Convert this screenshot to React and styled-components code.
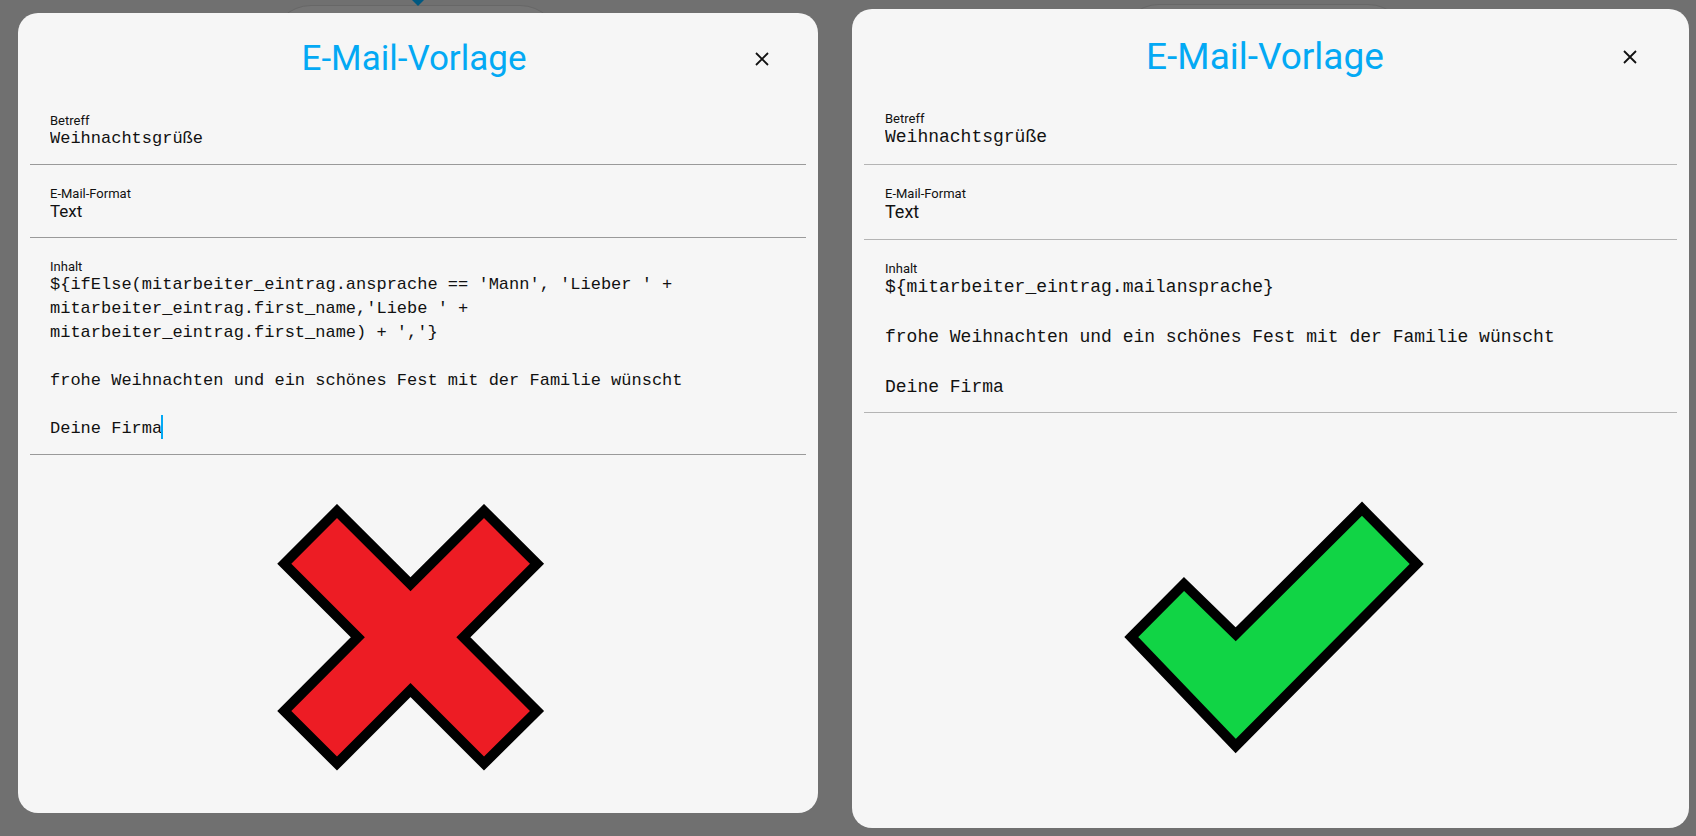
import React from "react";
import styled, { createGlobalStyle } from "styled-components";

const Global = createGlobalStyle`
  * { box-sizing: border-box; }
  body {
    margin: 0;
    background: #707070;
    color: #111;
    font-family: Roboto, "Liberation Sans", sans-serif;
  }
`;

const Page = styled.main`
  position: relative;
  display: grid;
  grid-template-columns: minmax(0, 800fr) minmax(0, 837fr);
  align-items: start;
  gap: 34px;
  min-height: 100vh;
  padding: 9px 7px 8px 18px;
  overflow: hidden;
`;

const NodeOutline = styled.div`
  position: absolute;
  top: ${(p) => p.$top}px;
  left: ${(p) => p.$left}%;
  width: 17%;
  height: 80px;
  border: 1px solid #676767;
  border-radius: 40px;
  background: #757575;
`;

const Arrow = styled.svg`
  position: absolute;
  top: 0;
  left: 24%;
  width: 24px;
  height: 6px;
`;

const Dialog = styled.section`
  position: relative;
  margin-top: ${(p) => (p.$large ? 0 : 4)}px;
  padding: 0 12px ${(p) => (p.$large ? 74 : 42)}px;
  border-radius: 20px;
  background: #f6f6f6;
`;

const Header = styled.header`
  display: grid;
  grid-template-columns: 52px 1fr ${(p) => (p.$large ? 63 : 60)}px;
  align-items: center;
  height: ${(p) => (p.$large ? 81 : 79)}px;
  padding-top: ${(p) => (p.$large ? 14 : 13)}px;
`;

const Title = styled.h1`
  grid-column: 2;
  margin: 0;
  color: #03a9f4;
  font-size: ${(p) => (p.$large ? 37 : 35)}px;
  font-weight: 400;
  line-height: 40px;
  text-align: center;
`;

const CloseButton = styled.button`
  display: grid;
  place-items: center;
  width: 32px;
  height: 32px;
  padding: 0;
  border: 0;
  background: none;
  color: #111;
`;

const Field = styled.div`
  position: relative;
  display: flex;
  flex-direction: column;
  padding: 23px 20px ${(p) => (p.$large ? 15 : 13)}px ${(p) => (p.$large ? 21 : 20)}px;
  border-bottom: 1px solid ${(p) => (p.$large ? "#b4b4b4" : "#9a9a9a")};
`;

const ContentField = styled(Field)`
  padding-bottom: ${(p) => (p.$large ? 12 : 13)}px;
`;

const Label = styled.label`
  font-size: 13px;
  line-height: 12px;
`;

const textStyle = `
  display: block;
  width: 100%;
  margin: 0;
  padding: 0;
  border: 0;
  outline: 0;
  border-radius: 0;
  background: none;
  color: #111;
`;

const mono = `"Liberation Mono", monospace`;

const TextInput = styled.input`
  ${textStyle}
  height: 24px;
  font: ${(p) => (p.$large ? 18 : 17)}px / 24px ${mono};
`;

const Select = styled.select`
  ${textStyle}
  appearance: none;
  height: 24px;
  padding-bottom: ${(p) => (p.$large ? 0 : 2)}px;
  font: ${(p) => (p.$large ? 18 : 17)}px / 22px Roboto, sans-serif;
`;

const TextArea = styled.textarea`
  ${textStyle}
  resize: none;
  overflow: hidden;
  font: ${(p) => (p.$large ? 18 : 17)}px / ${(p) => (p.$large ? 25 : 24)}px ${mono};
`;

const Caret = styled.span`
  position: absolute;
  bottom: 15px;
  left: 21px;
  width: 11ch;
  height: 24px;
  border-right: 2px solid #03a9f4;
  font: 17px / 24px ${mono};
  pointer-events: none;
`;

const Verdict = styled.svg`
  display: block;
  margin: ${(p) => p.$gap}px auto 0;
  max-width: 100%;
`;

function CloseIcon() {
  return (
    <svg width="14" height="14" viewBox="0 0 14 14" aria-hidden="true">
      <path d="M1 1L13 13M13 1L1 13" fill="none" stroke="currentColor" strokeWidth="1.8" />
    </svg>
  );
}

function TemplateDialog({ id, large, content, rows, caret, children }) {
  return (
    <Dialog $large={large} role="dialog" aria-labelledby={`${id}-title`}>
      <Header $large={large}>
        <Title id={`${id}-title`} $large={large}>E-Mail-Vorlage</Title>
        <CloseButton type="button" aria-label="Schließen"><CloseIcon /></CloseButton>
      </Header>
      <Field $large={large}>
        <Label htmlFor={`${id}-subject`}>Betreff</Label>
        <TextInput id={`${id}-subject`} $large={large} defaultValue="Weihnachtsgrüße" />
      </Field>
      <Field $large={large}>
        <Label htmlFor={`${id}-format`}>E-Mail-Format</Label>
        <Select id={`${id}-format`} $large={large} defaultValue="Text">
          <option>Text</option>
        </Select>
      </Field>
      <ContentField $large={large}>
        <Label htmlFor={`${id}-content`}>Inhalt</Label>
        <TextArea id={`${id}-content`} $large={large} rows={rows} spellCheck="false" defaultValue={content} />
        {caret && <Caret />}
      </ContentField>
      {children}
    </Dialog>
  );
}

const longContent = `\${ifElse(mitarbeiter_eintrag.ansprache == 'Mann', 'Lieber ' +
mitarbeiter_eintrag.first_name,'Liebe ' +
mitarbeiter_eintrag.first_name) + ','}

frohe Weihnachten und ein schönes Fest mit der Familie wünscht

Deine Firma`;

const shortContent = `\${mitarbeiter_eintrag.mailansprache}

frohe Weihnachten und ein schönes Fest mit der Familie wünscht

Deine Firma`;

export default function App() {
  return (
    <>
      <Global />
      <Page>
        <NodeOutline $top={5} $left={16} />
        <NodeOutline $top={4} $left={66} />
        <Arrow viewBox="0 0 24 6" aria-hidden="true">
          <path d="M5 0H17L11 6Z" fill="#005880" />
        </Arrow>
        <TemplateDialog id="long" content={longContent} rows={7} caret>
          <Verdict $gap={49} width="282" height="267" viewBox="277 504 282 267" role="img" aria-label="Falsch">
            <path
              d="M337 511L410.5 584.3L484 511L537 563.8L463.4 637.3L537 711L484 763.5L410.5 690L337 763.5L284.3 711L357.8 637.3L284.3 563.8Z"
              fill="#ed1c24" stroke="#000" strokeWidth="10"
            />
          </Verdict>
        </TemplateDialog>
        <TemplateDialog id="short" large content={shortContent} rows={5}>
          <Verdict $gap={88} width="307" height="253" viewBox="1117 501 307 253" role="img" aria-label="Richtig">
            <path
              d="M1131.3 637L1184 584L1235.7 634.3L1362 508.7L1416.7 564L1235.7 746Z"
              fill="#11d445" stroke="#000" strokeWidth="10"
            />
          </Verdict>
        </TemplateDialog>
      </Page>
    </>
  );
}
